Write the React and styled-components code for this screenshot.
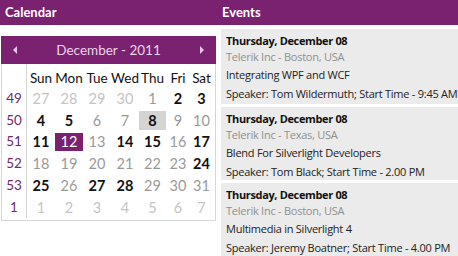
import React from 'react'
import styled, { createGlobalStyle } from 'styled-components'

const purple = '#7a2270'

const Global = createGlobalStyle`
  html, body { margin: 0; padding: 0; background: #fff; }
  body { font-family: Lato, "Open Sans", sans-serif; }
`

const Page = styled.div`
  width: 458px;
  height: 256px;
  overflow: hidden;
  display: grid;
  grid-template-columns: 218px 1fr;
  grid-template-rows: 25px 1fr;
`

const Bar = styled.div`
  background: ${purple};
  color: #fff;
  font-weight: 700;
  font-size: 13px;
  display: flex;
  align-items: center;
  padding-left: ${p => p.$pad}px;
  padding-bottom: 2px;
`

const Left = styled.div`
  padding: 11px 2px 0 1px;
`

const Calendar = styled.div`
  width: 215px;
  border: 1px solid #d6d6d6;
  border-top: none;
  box-sizing: border-box;
`

const CalHead = styled.div`
  height: 28px;
  background: ${purple};
  color: #ecd3ea;
  display: flex;
  align-items: center;
  justify-content: space-between;
  padding: 0 12px;
  margin: 0 -1px;
  font-size: 13.5px;
`

const Arrow = styled.span`
  width: 0;
  height: 0;
  border-top: 4px solid transparent;
  border-bottom: 4px solid transparent;
  ${p => (p.$dir === 'left' ? 'border-right: 4px solid #e8c8e6;' : 'border-left: 4px solid #e8c8e6;')}
`

const Grid = styled.div`
  display: grid;
  grid-template-columns: 25px 28px 28px 28px 28px 27px 24px 23px;
  grid-template-rows: 23px;
  grid-auto-rows: 21.8px;
  padding-bottom: 2px;
`

const WeekNum = styled.div`
  border-right: 1px solid #d6d6d6;
  color: #6e2a66;
  font-size: 13.5px;
  display: flex;
  align-items: center;
  justify-content: center;
`

const DayName = styled.div`
  font-size: 13.5px;
  color: #111;
  display: flex;
  align-items: center;
  justify-content: center;
  padding-top: 4px;
`

const Day = styled.div`
  font-size: 14.5px;
  display: flex;
  align-items: center;
  justify-content: center;
  margin: 2px 0 1px;
  font-weight: ${p => (p.$bold ? 700 : 400)};
  color: ${p => (p.$sel ? '#fff' : p.$bold ? '#111' : p.$faint ? '#c4c4c4' : '#9a9a9a')};
  background: ${p => (p.$sel ? purple : p.$today ? '#d4d4d4' : 'transparent')};
`

const Right = styled.div`
  padding: 4px 0 0 3px;
  display: flex;
  flex-direction: column;
  gap: 3px;
`

const Card = styled.div`
  background: #ebebeb;
  padding: 4px 0 3px 5px;
  height: ${p => p.$h}px;
  box-sizing: border-box;
  font-family: "Open Sans", sans-serif;
  font-size: 11px;
  letter-spacing: -0.25px;
  white-space: nowrap;
`

const Date = styled.div`
  font-weight: 700;
  letter-spacing: -0.35px;
  color: #111;
  line-height: 15px;
`

const Place = styled.div`
  color: #8f8f8f;
  line-height: 17px;
`

const Line = styled.div`
  color: #222;
  line-height: 19px;
`

const weeks = [
  [49, [[27, 'g'], [28, 'g'], [29, 'g'], [30, 'g'], [1, 'n'], [2, 'b'], [3, 'b']]],
  [50, [[4, 'b'], [5, 'b'], [6, 'n'], [7, 'n'], [8, 'bt'], [9, 'n'], [10, 'n']]],
  [51, [[11, 'b'], [12, 's'], [13, 'n'], [14, 'b'], [15, 'b'], [16, 'n'], [17, 'b']]],
  [52, [[18, 'n'], [19, 'n'], [20, 'n'], [21, 'n'], [22, 'n'], [23, 'n'], [24, 'b']]],
  [53, [[25, 'b'], [26, 'n'], [27, 'b'], [28, 'b'], [29, 'n'], [30, 'n'], [31, 'n']]],
  [1, [[1, 'g'], [2, 'g'], [3, 'g'], [4, 'g'], [5, 'g'], [6, 'g'], [7, 'g']]],
]

const events = [
  { place: 'Telerik Inc - Boston, USA', title: 'Integrating WPF and WCF', speaker: 'Speaker: Tom Wildermuth; Start Time - 9:45 AM', h: 75 },
  { place: 'Telerik Inc - Texas, USA', title: 'Blend For Silverlight Developers', speaker: 'Speaker: Tom Black; Start Time - 2.00 PM', h: 73 },
  { place: 'Telerik Inc - Boston, USA', title: 'Multimedia in Silverlight 4', speaker: 'Speaker: Jeremy Boatner; Start Time - 4.00 PM', h: 76 },
]

export default function App() {
  return (
    <>
      <Global />
      <Page>
        <Bar $pad={5}>Calendar</Bar>
        <Bar $pad={4}>Events</Bar>
        <Left>
          <Calendar>
            <CalHead>
              <Arrow $dir="left" />
              <span>December - 2011</span>
              <Arrow $dir="right" />
            </CalHead>
            <Grid>
              <WeekNum />
              {['Sun', 'Mon', 'Tue', 'Wed', 'Thu', 'Fri', 'Sat'].map(d => (
                <DayName key={d}>{d}</DayName>
              ))}
              {weeks.map(([wk, days]) => (
                <React.Fragment key={wk}>
                  <WeekNum>{wk}</WeekNum>
                  {days.map(([n, k], i) => (
                    <Day
                      key={i}
                      $bold={k.includes('b')}
                      $today={k.includes('t')}
                      $sel={k === 's'}
                      $faint={k === 'g'}
                    >
                      {n}
                    </Day>
                  ))}
                </React.Fragment>
              ))}
            </Grid>
          </Calendar>
        </Left>
        <Right>
          {events.map((e, i) => (
            <Card key={i} $h={e.h}>
              <Date>Thursday, December 08</Date>
              <Place>{e.place}</Place>
              <Line>{e.title}</Line>
              <Line>{e.speaker}</Line>
            </Card>
          ))}
        </Right>
      </Page>
    </>
  )
}
